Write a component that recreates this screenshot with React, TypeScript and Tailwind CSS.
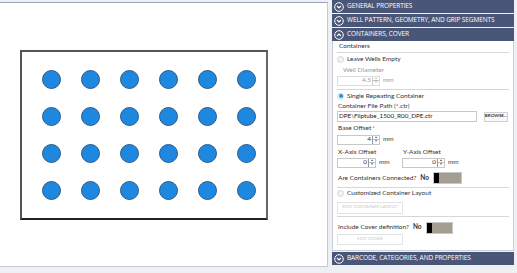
import React from 'react'

const rows = [0, 1, 2, 3]
const cols = [0, 1, 2, 3, 4, 5]

function Chevron({ up }: { up?: boolean }) {
  return (
    <svg width="10" height="10" viewBox="0 0 10 10" className="shrink-0">
      <circle cx="5" cy="5" r="4.3" fill="none" stroke="white" strokeWidth="1" />
      <path d={up ? 'M3 6 L5 4 L7 6' : 'M3 4 L5 6 L7 4'} fill="none" stroke="white" strokeWidth="1.1" />
    </svg>
  )
}

function Header({ label, up }: { label: string; up?: boolean }) {
  return (
    <div className="h-[13px] shrink-0 bg-[#4a5677] flex items-center gap-[3px] pl-[2px] text-white font-['Open_Sans',sans-serif] text-[6.5px] tracking-[-0.1px] uppercase">
      <Chevron up={up} />
      <span>{label}</span>
    </div>
  )
}

function Radio({ on, label }: { on?: boolean; label: string }) {
  return (
    <div className="flex items-center gap-[3px]">
      <span className={`w-[7px] h-[7px] rounded-full border ${on ? 'border-[#bcd6ee] bg-white flex items-center justify-center' : 'border-[#d6d6d6] bg-[#f2f2f2]'}`}>
        {on && <span className="w-[4px] h-[4px] rounded-full bg-[#2a8ce0]" />}
      </span>
      <span className="text-[#333]">{label}</span>
    </div>
  )
}

function Spin({ value, w, disabled }: { value: string; w: string; disabled?: boolean }) {
  return (
    <div className="flex items-center gap-[3px]">
      <div className={`${w} h-[10px] border ${disabled ? 'border-[#dcdcdc]' : 'border-[#c8c8c8]'} bg-white flex items-center justify-end`}>
        <span className={`pr-[1px] ${disabled ? 'text-[#999]' : 'text-[#333]'}`}>{value}</span>
        <span className={`w-[7px] h-full border-l ${disabled ? 'border-[#ccc] text-[#aaa]' : 'border-[#999] text-[#333]'} flex flex-col`}>
          <span className="flex-1 flex items-center justify-center text-[3px] leading-none border-b border-[#bbb]">▲</span>
          <span className="flex-1 flex items-center justify-center text-[3px] leading-none">▼</span>
        </span>
      </div>
      <span className={disabled ? 'text-[#999]' : 'text-[#444]'}>mm</span>
    </div>
  )
}

function Toggle({ w }: { w: string }) {
  return (
    <div className={`${w} h-[12px] shrink-0 border border-[#c8c8c8] bg-[#a39d92] flex`}>
      <span className="w-[5px] h-full bg-black" />
    </div>
  )
}

export default function App() {
  return (
    <div className="w-[517px] h-[273px] bg-[#eef0f4] flex font-['Lato',sans-serif] text-[6.5px] leading-none overflow-hidden whitespace-nowrap">
      <div className="w-[328px] h-[265px] mt-[2px] shrink-0 bg-white border-t border-r border-b border-[#9aa4b8] border-r-[#c5cad4] border-b-[#c5cad4] flex items-center">
        <div className="ml-[20px] w-[248px] h-[170px] border-2 border-[#555] border-b-[#222] border-r-[#666] flex flex-col justify-center gap-[18px] pl-[20px]">
          {rows.map(r => (
            <div key={r} className="flex gap-[20px]">
              {cols.map(c => (
                <span key={c} className="w-[19px] h-[19px] rounded-full bg-[#1e88e0] border border-[#2c5a87]" />
              ))}
            </div>
          ))}
        </div>
      </div>
      <div className="ml-[4px] w-[182px] shrink-0 flex flex-col">
        <Header label="General Properties" />
        <div className="h-px shrink-0" />
        <Header label="Well Pattern, Geometry, and Grip Segments" />
        <div className="h-px shrink-0" />
        <Header label="Containers, Cover" up />
        <div className="h-[210px] shrink-0 bg-white border-l border-r border-b border-[#c9ced8] px-[4px] flex flex-col text-[#333]">
          <div className="h-[12px] shrink-0 flex items-center pl-[2px] border-b border-[#d6d6d6]">Containers</div>
          <div className="h-[13px] shrink-0 flex items-center"><Radio label="Leave Wells Empty" /></div>
          <div className="h-[8px] shrink-0 flex items-center pl-[6px] text-[#999]">Well Diameter</div>
          <div className="h-[13px] shrink-0 flex items-center"><Spin value="4.5" w="w-[43px]" disabled /></div>
          <div className="h-[3px] shrink-0 border-b border-[#d6d6d6]" />
          <div className="h-[12px] shrink-0 flex items-center"><Radio on label="Single Repeating Container" /></div>
          <div className="h-[8px] shrink-0 flex items-center pl-[1px]">Container File Path (*.ctr)</div>
          <div className="h-[13px] shrink-0 flex items-center gap-[7px]">
            <div className="w-[140px] h-[11px] border border-[#c8c8c8] flex items-center pl-[1px] text-[6.3px] text-[#222]">DPE\Fliptube_1500_R00_DPE.ctr</div>
            <div className="w-[24px] h-[10px] border border-[#d0d0d0] bg-[#f8f8f8] flex items-center justify-center text-[4.5px] font-bold text-[#333]">BROWSE...</div>
          </div>
          <div className="h-[8px] shrink-0 flex items-end pl-[1px]">Base Offset <span className="text-[#e33] ml-[1px]">*</span></div>
          <div className="h-[17px] shrink-0 flex items-center"><Spin value="4" w="w-[43px]" /></div>
          <div className="h-[8px] shrink-0 flex items-center pl-[1px]">
            <span className="w-[65px]">X-Axis Offset</span>
            <span>Y-Axis Offset</span>
          </div>
          <div className="h-[13px] shrink-0 flex items-center">
            <div className="w-[65px]"><Spin value="0" w="w-[39px]" /></div>
            <Spin value="0" w="w-[43px]" />
          </div>
          <div className="h-[19px] shrink-0 flex items-center gap-[4px] pl-[1px] border-b border-[#d6d6d6]">
            <span>Are Containers Connected?</span>
            <span className="font-bold">No</span>
            <Toggle w="w-[29px]" />
          </div>
          <div className="h-[11px] shrink-0 flex items-center"><Radio label="Customized Container Layout" /></div>
          <div className="h-[18px] shrink-0 flex items-center border-b border-[#d6d6d6]">
            <div className="w-[66px] h-[12px] border border-[#e2e2e2] flex items-center justify-center text-[4.5px] text-[#c8c8c8]">EDIT CONTAINER LAYOUT</div>
          </div>
          <div className="h-[17px] shrink-0 pt-[4px] flex items-center gap-[4px] pl-[1px]">
            <span>Include Cover definition?</span>
            <span className="font-bold">No</span>
            <Toggle w="w-[27px]" />
          </div>
          <div className="h-[11px] shrink-0 flex items-center">
            <div className="w-[66px] h-[11px] border border-[#e2e2e2] flex items-center justify-center text-[4.5px] text-[#c8c8c8]">EDIT COVER</div>
          </div>
        </div>
        <div className="h-[1px] shrink-0" />
        <Header label="Barcode, Categories, and Properties" />
      </div>
    </div>
  )
}
